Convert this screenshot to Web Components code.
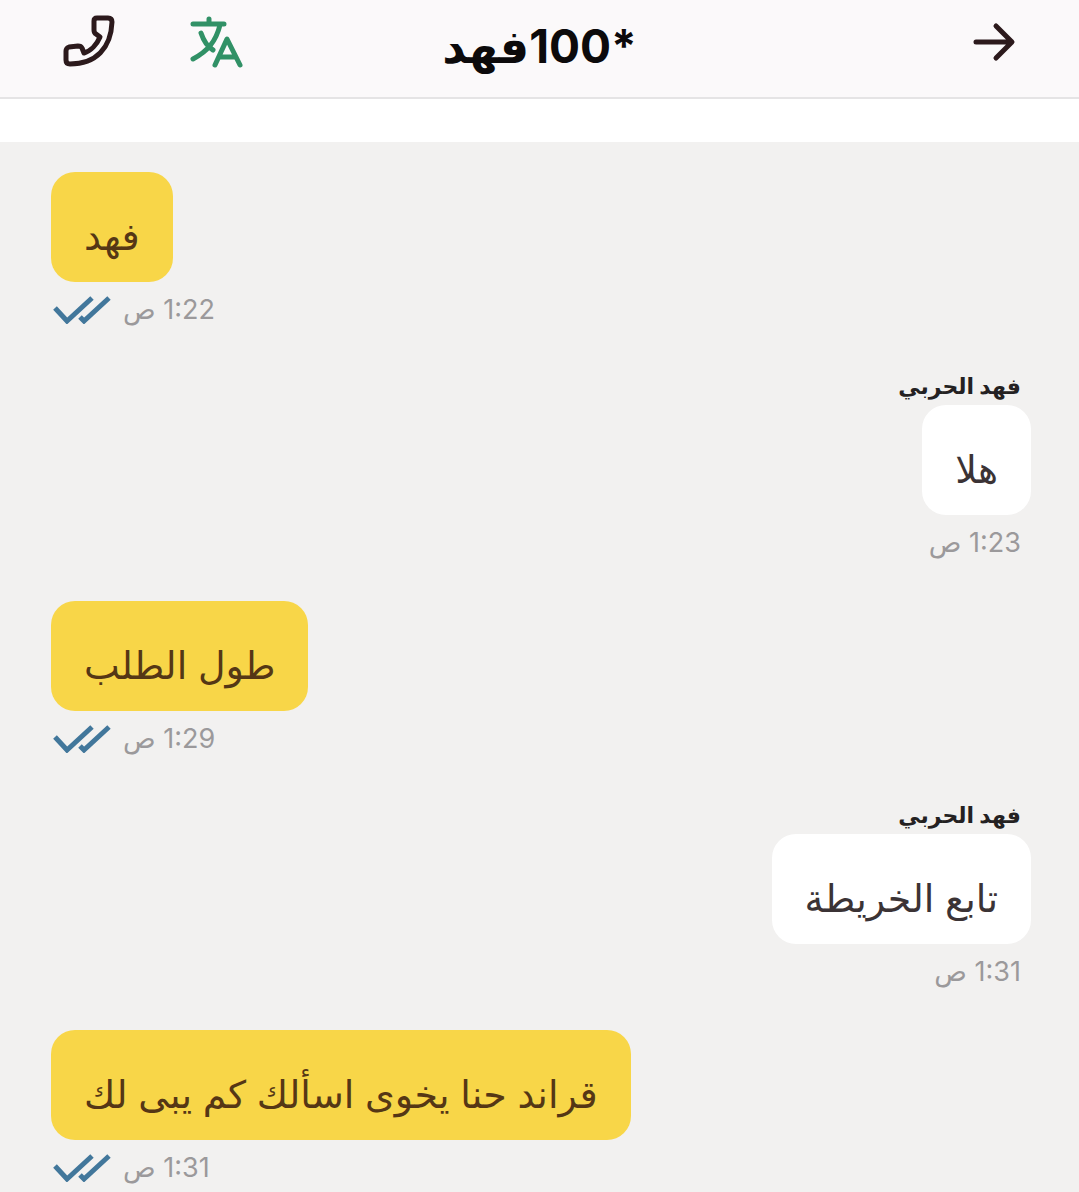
<!DOCTYPE html>
<html lang="ar" dir="rtl">

<head>
    <meta charset="utf-8">
    <meta name="viewport" content="width=device-width, initial-scale=1">
    <title>*100فهد</title>
    <style>
        body {
            margin: 0;
            background: #f2f1f0;
            font-family: Inter, "DejaVu Sans", sans-serif;
        }
    </style>
</head>

<body>

    <chat-header name="*100فهد"></chat-header>
    <chat-list>
        <chat-message sent time="1:22 ص">فهد</chat-message>
        <chat-message sender="فهد الحربي" time="1:23 ص">هلا</chat-message>
        <chat-message sent time="1:29 ص">طول الطلب</chat-message>
        <chat-message sender="فهد الحربي" time="1:31 ص">تابع الخريطة</chat-message>
        <chat-message sent time="1:31 ص">قراند حنا يخوى اسألك كم يبى لك</chat-message>
    </chat-list>

    <script>
        class ChatHeader extends HTMLElement {
            constructor() {
                super();
                const shadow = this.attachShadow({ mode: 'open' });
                shadow.innerHTML = `
                    <style>
                        :host {
                            display: block;
                            background: #fff;
                            padding-bottom: 43px;
                        }
                        header {
                            display: grid;
                            grid-template-columns: 1fr auto 1fr;
                            align-items: center;
                            height: 97px;
                            padding: 0 60px;
                            background: #fbf9fa;
                            border-bottom: 2px solid #e5e4e5;
                        }
                        h1 {
                            margin: 0;
                            padding-bottom: 6px;
                            font-size: 46px;
                            line-height: 60px;
                            font-weight: 700;
                            color: #0c0a0b;
                        }
                        .actions {
                            display: flex;
                            justify-content: flex-end;
                            gap: 72px;
                            padding-bottom: 14px;
                        }
                        .start {
                            justify-content: flex-start;
                        }
                        button {
                            display: flex;
                            padding: 0;
                            border: 0;
                            background: none;
                            color: #2c1a1c;
                            cursor: pointer;
                        }
                        .translate {
                            color: #319166;
                        }
                        svg {
                            fill: none;
                            stroke: currentColor;
                            stroke-width: 5;
                            stroke-linecap: round;
                            stroke-linejoin: round;
                        }
                    </style>
                    <header>
                        <div class="actions start">
                            <button type="button" aria-label="رجوع">
                                <svg width="48" height="56" viewBox="0 0 48 56">
                                    <path d="M5 28H40M25 12L41 28L25 44"/>
                                </svg>
                            </button>
                        </div>
                        <h1></h1>
                        <div class="actions">
                            <button type="button" class="translate" aria-label="ترجمة">
                                <svg width="56" height="56" viewBox="0 0 56 56">
                                    <path d="M5 10H36M21 5V10M32 11C28 27 20 37 5 45M13 19C16 28 20 33 25 36M27 51L39 25L52 51M31 43H47"/>
                                </svg>
                            </button>
                            <button type="button" aria-label="اتصال">
                                <svg width="56" height="56" viewBox="0 0 56 56">
                                    <path d="M37 4H48Q52 4 52 8C51 34 36 50 10 50Q6 50 6 46V37Q6 34 9 33L18 32Q21 32 22 34L24 39C31 37 37 30 40 23L36 20Q34 19 34 16V7Q34 4 37 4Z"/>
                                </svg>
                            </button>
                        </div>
                    </header>`;
            }

            connectedCallback() {
                this.shadowRoot.querySelector('h1').textContent = this.getAttribute('name');
            }
        }
        customElements.define('chat-header', ChatHeader);

        class ChatList extends HTMLElement {
            constructor() {
                super();
                const shadow = this.attachShadow({ mode: 'open' });
                shadow.innerHTML = `
                    <style>
                        :host {
                            display: flex;
                            flex-direction: column;
                            gap: 44px;
                            padding: 30px 48px 8px 51px;
                        }
                    </style>
                    <slot></slot>`;
            }
        }
        customElements.define('chat-list', ChatList);

        class ChatMessage extends HTMLElement {
            constructor() {
                super();
                const shadow = this.attachShadow({ mode: 'open' });
                shadow.innerHTML = `
                    <style>
                        :host {
                            display: flex;
                            flex-direction: column;
                            align-items: flex-start;
                        }
                        :host([sent]) {
                            align-items: flex-end;
                        }
                        .sender {
                            padding: 0 10px 1px;
                            font-size: 22px;
                            line-height: 36px;
                            font-weight: 700;
                            color: #242122;
                        }
                        .bubble {
                            padding: 40px 33px 22px;
                            border-radius: 24px;
                            background: #fff;
                            color: #3b3335;
                            font-size: 38px;
                            line-height: 48px;
                        }
                        :host([sent]) .bubble {
                            background: #f8d648;
                            color: #553715;
                        }
                        .meta {
                            display: flex;
                            align-items: center;
                            gap: 12px;
                            padding: 14px 10px 0;
                            font-size: 27px;
                            line-height: 28px;
                            color: #9b999b;
                        }
                        :host([sent]) .meta {
                            padding: 14px 0 0;
                        }
                        svg {
                            display: none;
                            fill: none;
                            stroke: #42779b;
                            stroke-width: 5;
                        }
                        :host([sent]) svg {
                            display: block;
                        }
                        [hidden] {
                            display: none;
                        }
                    </style>
                    <div class="sender"></div>
                    <div class="bubble"><slot></slot></div>
                    <div class="meta">
                        <time></time>
                        <svg width="60" height="28" viewBox="0 0 60 28" aria-hidden="true">
                            <path d="M4 12L16 25L41 2M29 21L33 25L58 2"/>
                        </svg>
                    </div>`;
            }

            connectedCallback() {
                const sender = this.shadowRoot.querySelector('.sender');
                sender.textContent = this.getAttribute('sender');
                sender.hidden = !this.hasAttribute('sender');
                this.shadowRoot.querySelector('time').textContent = this.getAttribute('time');
            }
        }
        customElements.define('chat-message', ChatMessage);
    </script>

</body>

</html>
